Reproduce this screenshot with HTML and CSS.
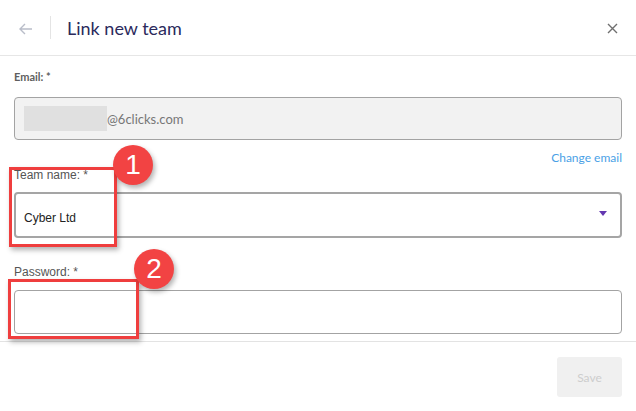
FILE: index.html
```html
<!DOCTYPE html>
<html lang="en">
<head>
    <meta charset="UTF-8">
    <meta name="viewport" content="width=device-width, initial-scale=1.0">
    <title>Link new team</title>
    <link rel="stylesheet" href="styles.css">
</head>
<body>

    <div class="modal">
        <header class="modal-head">
            <button class="back" aria-label="Back">
                <svg width="14" height="12" viewBox="0 0 14 12"><path d="M13 6H1.5M6 1L1 6l5 5" fill="none" stroke="#b9bdc9" stroke-width="1.4"/></svg>
            </button>
            <span class="divider"></span>
            <h1>Link new team</h1>
            <button class="close" aria-label="Close">
                <svg width="11" height="11" viewBox="0 0 11 11"><path d="M1 1l9 9M10 1l-9 9" fill="none" stroke="#6f6f6f" stroke-width="1.4"/></svg>
            </button>
        </header>

        <form class="modal-body">
            <label class="field-label">Email: *</label>
            <div class="input readonly">
                <span class="redacted"></span><span class="email-text">@6clicks.com</span>
            </div>
            <div class="change-row"><a href="#" class="change-email">Change email</a></div>

            <label class="field-label plain team-label">Team name: *</label>
            <div class="select">
                <span class="select-value">Cyber Ltd</span>
                <span class="caret"></span>
            </div>

            <label class="field-label plain pw-label">Password: *</label>
            <div class="input pw"></div>
        </form>

        <footer class="modal-foot">
            <button class="save" disabled>Save</button>
        </footer>

        <!-- callouts -->
        <div class="mark mark-1"></div>
        <div class="badge badge-1">1</div>
        <div class="mark mark-2"></div>
        <div class="badge badge-2">2</div>
    </div>

</body>
</html>
```

FILE: styles.css
```css
body {
    margin: 0;
    background: #fff;
    font-family: Lato, "Open Sans", sans-serif;
    color: #333;
}
.modal {
    position: relative;
    width: 636px;
    height: 411px;
    overflow: hidden;
}
.modal-head {
    height: 55px;
    display: flex;
    align-items: center;
    border-bottom: 1px solid #e6e6e6;
}
.back, .close {
    background: none;
    border: none;
    padding: 0;
    cursor: pointer;
    display: flex;
}
.back {
    margin-left: 19px;
    margin-top: 2px;
}
.divider {
    width: 1px;
    height: 23px;
    background: #e4e4e4;
    margin-left: 17px;
}
h1 {
    margin: 0 0 0 16px;
    font-size: 18px;
    font-weight: 400;
    color: #2b2a5c;
    flex: 1;
}
.close {
    margin-right: 18px;
    margin-top: 2px;
}
.modal-body {
    padding: 14px 14px 0;
}
.field-label {
    display: block;
    font-size: 11px;
    line-height: 14px;
    font-weight: 700;
    color: #5f5f5f;
    margin-bottom: 13px;
}
.plain {
    font-family: "Liberation Sans", Arial, sans-serif;
    font-size: 12px;
    font-weight: 400;
    color: #555;
}
.input {
    height: 41px;
    border: 1px solid #a3a3a3;
    border-radius: 4px;
    display: flex;
    align-items: center;
    padding-left: 9px;
}
.readonly {
    background: #f2f2f2;
}
.redacted {
    width: 83px;
    height: 25px;
    background: #e0e0e0;
}
.email-text {
    font-size: 13px;
    color: #777;
}
.change-row {
    text-align: right;
    margin-top: 8px;
    line-height: 16px;
    height: 16px;
}
.change-email {
    font-size: 12px;
    color: #4a9fe6;
    text-decoration: none;
}
.team-label {
    margin-top: 4px;
    margin-bottom: 10px;
}
.select {
    height: 42px;
    border: 2px solid #a5a5a5;
    border-radius: 4px;
    display: flex;
    align-items: center;
    justify-content: space-between;
    padding: 0 13px 0 8px;
}
.select-value {
    font-family: "Liberation Sans", Arial, sans-serif;
    font-size: 12px;
    color: #222;
    margin-top: 6px;
}
.caret {
    width: 0;
    height: 0;
    border-left: 4px solid transparent;
    border-right: 4px solid transparent;
    border-top: 5px solid #6338b0;
    margin-top: -3px;
}
.pw-label {
    margin-top: 27px;
    margin-bottom: 11px;
}
.pw {
    height: 42px;
    background: #fff;
}
.modal-foot {
    margin-top: 7px;
    border-top: 1px solid #e3e3e3;
    display: flex;
    justify-content: flex-end;
    padding: 15px 14px 0;
}
.save {
    width: 65px;
    height: 40px;
    background: #f0f0f0;
    border: none;
    border-radius: 3px;
    color: #cdcdcd;
    font-family: Lato, sans-serif;
    font-size: 12px;
}
.mark {
    position: absolute;
    border: 3px solid #ef3e3e;
    box-shadow: 2px 3px 5px rgba(0, 0, 0, 0.3);
}
.mark-1 {
    left: 9px;
    top: 167px;
    width: 102px;
    height: 74px;
}
.mark-2 {
    left: 8px;
    top: 279px;
    width: 125px;
    height: 54px;
}
.badge {
    position: absolute;
    width: 40px;
    height: 40px;
    border-radius: 50%;
    background: #f24343;
    color: #fff;
    font-family: "Liberation Sans", Arial, sans-serif;
    font-size: 28px;
    line-height: 40px;
    text-align: center;
    box-shadow: 2px 3px 5px rgba(0, 0, 0, 0.3);
}
.badge-1 {
    left: 113px;
    top: 145px;
}
.badge-2 {
    left: 134px;
    top: 249px;
}
```
